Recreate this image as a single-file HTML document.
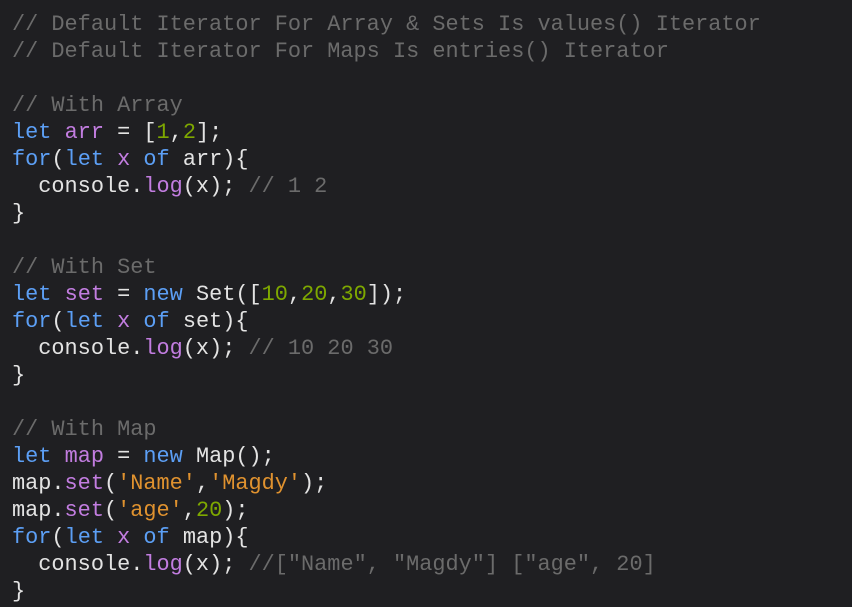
<!DOCTYPE html><html><head><style>
html,body{margin:0;background:#1f1f22;width:852px;height:607px;overflow:hidden}
pre{margin:0;padding:11px 0 0 12px;font-family:"Liberation Mono",monospace;font-size:21.9px;line-height:27px;color:#e3e3e3}
.c{color:#6b6b6b}.k{color:#5c9ff5}.v{color:#c27de0}.n{color:#7ea800}.s{color:#e0922f}
</style></head><body><pre><span class="c">// Default Iterator For Array &amp; Sets Is values() Iterator</span>
<span class="c">// Default Iterator For Maps Is entries() Iterator</span>

<span class="c">// With Array</span>
<span class="k">let</span> <span class="v">arr</span> = [<span class="n">1</span>,<span class="n">2</span>];
<span class="k">for</span>(<span class="k">let</span> <span class="v">x</span> <span class="k">of</span> arr){
  console.<span class="v">log</span>(x); <span class="c">// 1 2</span>
}

<span class="c">// With Set</span>
<span class="k">let</span> <span class="v">set</span> = <span class="k">new</span> Set([<span class="n">10</span>,<span class="n">20</span>,<span class="n">30</span>]);
<span class="k">for</span>(<span class="k">let</span> <span class="v">x</span> <span class="k">of</span> set){
  console.<span class="v">log</span>(x); <span class="c">// 10 20 30</span>
}

<span class="c">// With Map</span>
<span class="k">let</span> <span class="v">map</span> = <span class="k">new</span> Map();
map.<span class="v">set</span>(<span class="s">'Name'</span>,<span class="s">'Magdy'</span>);
map.<span class="v">set</span>(<span class="s">'age'</span>,<span class="n">20</span>);
<span class="k">for</span>(<span class="k">let</span> <span class="v">x</span> <span class="k">of</span> map){
  console.<span class="v">log</span>(x); <span class="c">//["Name", "Magdy"] ["age", 20]</span>
}</pre></body></html>
